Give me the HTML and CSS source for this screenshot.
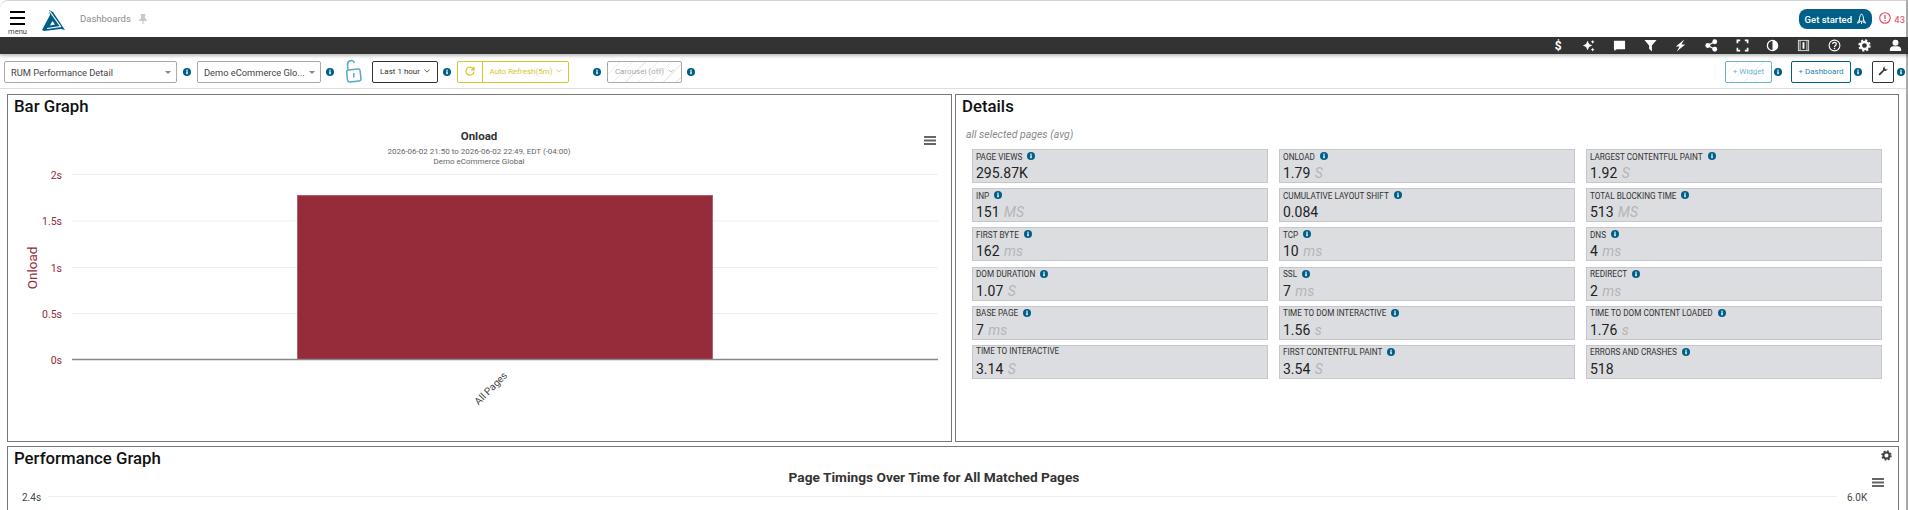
FILE: index.html
```html
<!DOCTYPE html>
<html lang="en">
<head>
    <meta charset="UTF-8">
    <title>Dashboards</title>
    <link rel="stylesheet" href="styles.css">
</head>
<body>
    <svg class="defs" width="0" height="0">
        <symbol id="i-info" viewBox="0 0 8 8">
            <circle cx="4" cy="4" r="4" fill="#005f87"/>
            <rect x="3.1" y="3.3" width="1.8" height="2.9" fill="#cfe0e8"/>
            <rect x="3.1" y="1.7" width="1.8" height="1.1" fill="#cfe0e8"/>
        </symbol>
        <symbol id="i-gear" viewBox="0 0 16 16">
            <circle cx="8" cy="8" r="4.4" fill="none" stroke="currentColor" stroke-width="3"/>
            <circle cx="8" cy="8" r="6.4" fill="none" stroke="currentColor" stroke-width="2.4" stroke-dasharray="2.6 2.43"/>
        </symbol>
        <symbol id="i-burger" viewBox="0 0 12 9">
            <rect y="0" width="12" height="2" fill="#666"/>
            <rect y="3.5" width="12" height="2" fill="#666"/>
            <rect y="7" width="12" height="2" fill="#666"/>
        </symbol>
    </svg>

    <div class="scrollbar"></div>

    <header class="header">
        <div class="menu">
            <span class="menu-lines"><i></i><i></i><i></i></span>
            <span class="menu-label">menu</span>
        </div>
        <svg class="logo" viewBox="0 0 24 21">
            <polygon points="0,20 8,5 7,0 11,2 23,20 19,19 2,21" fill="#005f87"/>
            <polyline points="7.500,1 18.500,16.500 5,18.500" fill="none" stroke="#fff" stroke-width="1.200"/>
            <polygon points="10.500,11 8,15.500 13,14.500" fill="#fff"/>
        </svg>
        <span class="crumb">Dashboards</span>
        <svg class="pin" viewBox="0 0 8 10">
            <path d="M1.5 0h5v1l-.6.5V4L8 6v1H4.6v3h-1.200V7H0V6l2.100-2V1.500L1.500 1z" fill="#c9c9c9"/>
        </svg>
        <div class="header-right">
            <button class="get-started">Get started
                <svg viewBox="0 0 12 13" width="11" height="12">
                    <path d="M6 .8C4 3 3.500 5.500 3.800 9h4.400C8.500 5.500 8 3 6 .8zM3.800 7L1.500 11l2.800-1M8.200 7l2.300 4-2.800-1M6 9.500V12" fill="none" stroke="#fff" stroke-width="1"/>
                </svg>
            </button>
            <svg class="alert" viewBox="0 0 12 12">
                <circle cx="6" cy="6" r="5.300" fill="none" stroke="#e8405a" stroke-width="1.100"/>
                <rect x="5.400" y="2.800" width="1.200" height="4.200" fill="#e8405a"/>
                <rect x="5.400" y="8" width="1.200" height="1.200" fill="#e8405a"/>
            </svg>
            <span class="alert-count">43</span>
        </div>
    </header>

    <nav class="darkbar">
        <span class="dark-item dollar">$</span>
        <span class="dark-item"><svg viewBox="0 0 14 14"><path d="M6 2l1.600 3.400L11 7 7.600 8.600 6 12 4.400 8.600 1 7l3.400-1.600zM11.500 1l.7 1.300 1.300.7-1.300.7-.7 1.300-.7-1.300L9.500 3l1.300-.7zM11.500 9.500l.7 1.300 1.300.7-1.300.7-.7 1.300-.7-1.300-1.300-.7 1.300-.7z" fill="#fff"/></svg></span>
        <span class="dark-item"><svg viewBox="0 0 14 14"><path d="M1 2h12v9H4l-2.500 2V11H1z" fill="#fff"/></svg></span>
        <span class="dark-item"><svg viewBox="0 0 14 14"><path d="M.5 1h13L8.500 7v6.500l-3-3V7z" fill="#fff"/></svg></span>
        <span class="dark-item"><svg viewBox="0 0 14 14"><path d="M11 0.500L2 8h4l-3 5.500L12 6H8z" fill="#fff"/></svg></span>
        <span class="dark-item"><svg viewBox="0 0 14 14"><circle cx="3" cy="7" r="2.600" fill="#fff"/><circle cx="10.500" cy="3" r="2.600" fill="#fff"/><circle cx="10.500" cy="11" r="2.600" fill="#fff"/><path d="M3 7l7.500-4M3 7l7.500 4" stroke="#fff" stroke-width="1.400"/></svg></span>
        <span class="dark-item"><svg viewBox="0 0 14 14"><path d="M1.500 4.500v-3h3M9.500 1.500h3v3M12.500 9.500v3h-3M4.500 12.500h-3v-3" fill="none" stroke="#fff" stroke-width="1.800"/></svg></span>
        <span class="dark-item"><svg viewBox="0 0 14 14"><circle cx="7" cy="7" r="5.500" fill="none" stroke="#fff" stroke-width="1.400"/><path d="M7 1.500a5.500 5.500 0 0 1 0 11z" fill="#fff"/></svg></span>
        <span class="dark-item"><svg viewBox="0 0 14 14"><rect x="1.500" y="1.500" width="11" height="11" fill="none" stroke="#ddd" stroke-width="1"/><path d="M3.300 1.500v11M10.700 1.500v11" stroke="#ddd" stroke-width="1"/><rect x="6" y="3.500" width="2" height="7" fill="#fff"/></svg></span>
        <span class="dark-item"><svg viewBox="0 0 14 14"><circle cx="7" cy="7" r="5.800" fill="none" stroke="#fff" stroke-width="1.200"/><path d="M5 5.500C5 3 9 3 9 5.500 9 7 7 7 7 8.500" fill="none" stroke="#fff" stroke-width="1.300"/><rect x="6.300" y="9.500" width="1.400" height="1.400" fill="#fff"/></svg></span>
        <span class="dark-item"><svg width="13" height="13"><use href="#i-gear"/></svg></span>
        <span class="dark-item"><svg viewBox="0 0 14 14"><circle cx="7" cy="4" r="3.200" fill="#fff"/><path d="M1 13V11c0-2 2-3.200 3.500-3.200h5C11 7.800 13 9 13 11v2z" fill="#fff"/></svg></span>
    </nav>

    <section class="toolbar">
        <div class="tools">
            <div class="select select-page"><span>RUM Performance Detail</span><b class="caret"></b></div>
            <svg class="info tip-1"><use href="#i-info"/></svg>
            <div class="select select-app"><span>Demo eCommerce Glo...</span><b class="caret"></b></div>
            <svg class="info tip-2"><use href="#i-info"/></svg>
            <svg class="lock" viewBox="0 0 17 24">
                <path d="M3 11L2.500 5.500C2.400 1.500 8 0 9.500 4" fill="none" stroke="#5aa9c2" stroke-width="1.500"/>
                <rect x="2" y="10.500" width="13.500" height="12" rx="2" transform="rotate(-6 8 16)" fill="none" stroke="#5aa9c2" stroke-width="1.500"/>
                <rect x="8" y="14" width="1.500" height="4.500" fill="#5aa9c2"/>
            </svg>
            <button class="btn btn-time">Last 1 hour<svg class="chev" viewBox="0 0 8 5"><path d="M.5 .5L4 4 7.500 .5" fill="none" stroke="#333"/></svg></button>
            <svg class="info tip-2"><use href="#i-info"/></svg>
            <div class="refresh">
                <span class="refresh-icon"><svg viewBox="0 0 10 10" width="10" height="10"><path d="M8.500 3.200A4 4 0 1 0 9 5.500M9 .8v3H6" fill="none" stroke="#d4c92a" stroke-width="1.200"/></svg></span>
                <span class="refresh-label">Auto Refresh(5m)<svg class="chev" viewBox="0 0 8 5"><path d="M.5 .5L4 4 7.500 .5" fill="none" stroke="#d4c92a"/></svg></span>
            </div>
            <svg class="info tip-3"><use href="#i-info"/></svg>
            <button class="btn btn-carousel">Carousel (off)<svg class="chev" viewBox="0 0 8 5"><path d="M.5 .5L4 4 7.500 .5" fill="none" stroke="#aaa"/></svg></button>
            <svg class="info tip-2"><use href="#i-info"/></svg>
        </div>
        <div class="tools">
            <button class="btn btn-widget">+ Widget</button>
            <svg class="info tip-4"><use href="#i-info"/></svg>
            <button class="btn btn-dash">+ Dashboard</button>
            <svg class="info tip-5"><use href="#i-info"/></svg>
            <button class="btn btn-wrench"><svg viewBox="0 0 12 12" width="10" height="10"><path d="M11.500 3a3 3 0 0 1-4 2.800L2.800 10.800A1 1 0 0 1 1.200 9.200L6.200 4.500A3 3 0 0 1 9 .5L7.500 2.200 9.800 4.500z" fill="#333"/></svg></button>
            <svg class="info tip-5"><use href="#i-info"/></svg>
        </div>
    </section>

    <main class="panels">
        <section class="panel">
            <h2>Bar Graph</h2>
            <svg class="chart" viewBox="8 119 943 322" width="943" height="322">
                <text class="chart-title" x="479" y="140" text-anchor="middle">Onload</text>
                <text class="chart-sub" x="479" y="154" text-anchor="middle">2026-06-02 21:50 to 2026-06-02 22:49, EDT (-04:00)</text>
                <text class="chart-sub" x="479" y="164" text-anchor="middle">Demo eCommerce Global</text>
                <use href="#i-burger" x="924" y="136" width="12" height="9"/>

                <g class="grid-lines">
                    <line x1="72" x2="938" y1="174.500" y2="174.500"/>
                    <line x1="72" x2="938" y1="221" y2="221"/>
                    <line x1="72" x2="938" y1="267.500" y2="267.500"/>
                    <line x1="72" x2="938" y1="313.500" y2="313.500"/>
                </g>
                <rect x="297.500" y="195.500" width="415" height="164" fill="#962b39" stroke="#b0606b"/>
                <line x1="72" x2="938" y1="359.500" y2="359.500" stroke="#888" stroke-width="1.500"/>

                <g class="axis-red">
                    <text x="62" y="179" text-anchor="end">2s</text>
                    <text x="62" y="225" text-anchor="end">1.5s</text>
                    <text x="62" y="272" text-anchor="end">1s</text>
                    <text x="62" y="318" text-anchor="end">0.5s</text>
                    <text x="62" y="364" text-anchor="end">0s</text>
                </g>
                <text class="axis-name" transform="translate(37 268) rotate(-90)" text-anchor="middle">Onload</text>
                <text class="axis-cat" transform="translate(508 376) rotate(-45)" text-anchor="end">All Pages</text>
            </svg>
        </section>

        <section class="panel">
            <h2>Details</h2>
            <p class="scope">all selected pages (avg)</p>
            <div class="cards">
                <div class="card"><div class="card-label">Page Views<svg class="info"><use href="#i-info"/></svg></div><div class="card-value">295.87K</div></div>
                <div class="card"><div class="card-label">Onload<svg class="info"><use href="#i-info"/></svg></div><div class="card-value">1.79 <em>S</em></div></div>
                <div class="card"><div class="card-label">Largest Contentful Paint<svg class="info"><use href="#i-info"/></svg></div><div class="card-value">1.92 <em>S</em></div></div>
                <div class="card"><div class="card-label">INP<svg class="info"><use href="#i-info"/></svg></div><div class="card-value">151 <em>MS</em></div></div>
                <div class="card"><div class="card-label">Cumulative Layout Shift<svg class="info"><use href="#i-info"/></svg></div><div class="card-value">0.084</div></div>
                <div class="card"><div class="card-label">Total Blocking Time<svg class="info"><use href="#i-info"/></svg></div><div class="card-value">513 <em>MS</em></div></div>
                <div class="card"><div class="card-label">First Byte<svg class="info"><use href="#i-info"/></svg></div><div class="card-value">162 <em>ms</em></div></div>
                <div class="card"><div class="card-label">TCP<svg class="info"><use href="#i-info"/></svg></div><div class="card-value">10 <em>ms</em></div></div>
                <div class="card"><div class="card-label">DNS<svg class="info"><use href="#i-info"/></svg></div><div class="card-value">4 <em>ms</em></div></div>
                <div class="card"><div class="card-label">DOM Duration<svg class="info"><use href="#i-info"/></svg></div><div class="card-value">1.07 <em>S</em></div></div>
                <div class="card"><div class="card-label">SSL<svg class="info"><use href="#i-info"/></svg></div><div class="card-value">7 <em>ms</em></div></div>
                <div class="card"><div class="card-label">Redirect<svg class="info"><use href="#i-info"/></svg></div><div class="card-value">2 <em>ms</em></div></div>
                <div class="card"><div class="card-label">Base Page<svg class="info"><use href="#i-info"/></svg></div><div class="card-value">7 <em>ms</em></div></div>
                <div class="card"><div class="card-label">Time to DOM Interactive<svg class="info"><use href="#i-info"/></svg></div><div class="card-value">1.56 <em>s</em></div></div>
                <div class="card"><div class="card-label">Time to DOM Content Loaded<svg class="info"><use href="#i-info"/></svg></div><div class="card-value">1.76 <em>s</em></div></div>
                <div class="card"><div class="card-label card-label-plain">Time to Interactive</div><div class="card-value">3.14 <em>S</em></div></div>
                <div class="card"><div class="card-label">First Contentful Paint<svg class="info"><use href="#i-info"/></svg></div><div class="card-value">3.54 <em>S</em></div></div>
                <div class="card"><div class="card-label">Errors and Crashes<svg class="info"><use href="#i-info"/></svg></div><div class="card-value">518</div></div>
            </div>
        </section>

        <section class="panel panel-wide">
            <h2>Performance Graph</h2>
            <svg class="panel-gear"><use href="#i-gear"/></svg>
            <svg class="chart chart-wide" viewBox="8 461 1890 70" width="1890" height="70">
                <text class="chart-title wide-title" x="934" y="482" text-anchor="middle">Page Timings Over Time for All Matched Pages</text>
                <use href="#i-burger" x="1872" y="478" width="12" height="9"/>
                <line class="wide-grid" x1="48" x2="1837" y1="496.500" y2="496.500"/>
                <text class="axis-grey" x="22" y="501">2.4s</text>
                <text class="axis-grey" x="1847" y="501">6.0K</text>
            </svg>
        </section>
    </main>
</body>
</html>
```

FILE: styles.css
```css
html, body {
    margin: 0;
    height: 510px;
    overflow: hidden;
    background: #fff;
}
body {
    font-family: Roboto, "Liberation Sans", sans-serif;
    color: #222;
    position: relative;
}
button {
    font-family: inherit;
    cursor: pointer;
}
.defs {
    position: absolute;
}
.scrollbar {
    position: absolute;
    top: 0;
    right: 0;
    width: 2px;
    height: 510px;
    background: #aaa;
}

/* top header */
.header {
    height: 36px;
    display: flex;
    align-items: flex-start;
    border-top: 1px solid #d4d4d4;
    border-top-left-radius: 8px;
}
.menu {
    width: 17px;
    margin: 10px 0 0 9px;
    display: flex;
    flex-direction: column;
    align-items: center;
}
.menu-lines i {
    display: block;
    width: 15px;
    height: 2px;
    margin-bottom: 4px;
    background: #000;
}
.menu-label {
    font-size: 7.500px;
    line-height: 8px;
    color: #444;
    margin-top: -1px;
}
.logo {
    width: 24px;
    height: 21px;
    margin: 9px 0 0 16px;
}
.crumb {
    margin: 11px 0 0 14px;
    font-size: 9.500px;
    line-height: 14px;
    color: #8a8a8a;
}
.pin {
    width: 8px;
    height: 10px;
    margin: 13px 0 0 8px;
}
.header-right {
    margin-left: auto;
    margin-right: 3px;
    display: flex;
    align-items: center;
    padding-top: 8px;
}
.get-started {
    width: 73px;
    height: 20px;
    padding: 0;
    border: 0;
    border-radius: 8px;
    background: #005f87;
    color: #fff;
    font-size: 9.500px;
    font-weight: 500;
    display: flex;
    align-items: center;
    justify-content: center;
    gap: 4px;
}
.alert {
    width: 12px;
    height: 12px;
    margin: -2px 0 0 7px;
}
.alert-count {
    margin-left: 3px;
    font-size: 9.500px;
    color: #e8405a;
}

/* dark icon strip */
.darkbar {
    height: 17px;
    margin-right: -3px;
    background: #333;
    display: flex;
    justify-content: flex-end;
    box-shadow: 0 2px 3px rgba(0,0,0,0.25);
    position: relative;
}
.dark-item {
    width: 30.700px;
    display: flex;
    align-items: center;
    justify-content: center;
    color: #fff;
}
.dark-item svg {
    width: 13px;
    height: 13px;
}
.dollar {
    font-size: 12px;
    font-weight: 700;
}

/* filter toolbar */
.toolbar {
    height: 34px;
    display: flex;
    justify-content: space-between;
    padding: 0 3px 0 4px;
    border-bottom: 1px solid #ddd;
}
.tools {
    display: flex;
    align-items: flex-start;
    padding-top: 7px;
}
.info {
    width: 8px;
    height: 8px;
    flex: none;
}
.tools .info {
    margin-top: 7px;
}
.tip-1 { margin-left: 6px; }
.tip-2 { margin-left: 5px; }
.tip-3 { margin-left: 24px; }
.tip-4 { margin-left: 2px; }
.tip-5 { margin-left: 3px; }
.select {
    height: 22px;
    box-sizing: border-box;
    border: 1px solid #aaa;
    border-radius: 2px;
    font-size: 9.300px;
    color: #444;
    white-space: nowrap;
    display: flex;
    align-items: center;
    justify-content: space-between;
    padding: 0 5px 0 6px;
}
.select-page {
    width: 173px;
}
.select-app {
    width: 124px;
    margin-left: 6px;
}
.caret {
    border: 3px solid transparent;
    border-top: 3px solid #888;
    border-bottom: 0;
}
.lock {
    width: 17px;
    height: 24px;
    margin: -2px 0 0 11px;
}
.btn {
    height: 22px;
    box-sizing: border-box;
    padding: 0 0 2px;
    border: 1px solid #333;
    border-radius: 2px;
    background: #fff;
    font-size: 8px;
    white-space: nowrap;
    color: #333;
    display: flex;
    align-items: center;
    justify-content: center;
    gap: 4px;
}
.chev {
    width: 6px;
    height: 4px;
}
.btn-time {
    width: 66px;
    margin-left: 10px;
}
.refresh {
    width: 112px;
    height: 22px;
    box-sizing: border-box;
    margin-left: 6px;
    display: flex;
    border: 1px solid #d4c92a;
    border-radius: 2px;
    font-size: 8px;
    white-space: nowrap;
    color: #d4c92a;
}
.refresh-icon {
    width: 25px;
    flex: none;
    display: flex;
    align-items: center;
    justify-content: center;
    padding-bottom: 3px;
    box-sizing: border-box;
    border-right: 1px solid #d4c92a;
}
.refresh-label {
    flex: 1;
    display: flex;
    align-items: center;
    justify-content: center;
    gap: 3px;
    padding-bottom: 2px;
}
.btn-carousel {
    width: 75px;
    margin-left: 6px;
    border-color: #aaa;
    color: #aaa;
    background: repeating-linear-gradient(135deg, #fff, #fff 8px, #eee 8px, #eee 9px);
}
.btn-widget {
    width: 47px;
    border-color: #6db3cf;
    color: #6db3cf;
    background: repeating-linear-gradient(135deg, #fff, #fff 8px, #eef5f8 8px, #eef5f8 9px);
}
.btn-dash {
    width: 60px;
    margin-left: 9px;
    border-color: #005f87;
    color: #2a86ad;
}
.btn-wrench {
    width: 22px;
    margin-left: 10px;
}

/* panels */
.panels {
    display: grid;
    grid-template-columns: 945px 944px;
    column-gap: 3px;
    row-gap: 4px;
    padding: 5px 0 0 7px;
}
.panel {
    height: 348px;
    box-sizing: border-box;
    border: 1px solid #777;
    position: relative;
}
.panel h2 {
    margin: 0;
    padding-left: 6px;
    height: 24px;
    font-size: 16.800px;
    line-height: 22px;
    font-weight: 500;
    color: #111;
}
.panel-wide {
    grid-column: 1 / -1;
    height: 80px;
}
.panel-gear {
    position: absolute;
    top: 3px;
    right: 6px;
    width: 11px;
    height: 11px;
    color: #444;
}
.chart {
    display: block;
}
.chart-wide {
    margin-top: -10px;
}
.chart-title {
    font-size: 11.500px;
    font-weight: 700;
    fill: #333;
}
.wide-title {
    font-size: 13.700px;
}
.chart-sub {
    font-size: 8px;
    fill: #666;
}
.grid-lines line, .wide-grid {
    stroke: #eee;
    stroke-width: 1;
}
.axis-red text {
    font-size: 10.500px;
    fill: #962b39;
}
.axis-name {
    font-size: 13.500px;
    fill: #962b39;
}
.axis-cat {
    font-size: 10px;
    fill: #444;
}
.axis-grey {
    font-size: 10px;
    fill: #444;
}

/* details cards */
.scope {
    margin: 0 0 0 10px;
    padding-top: 9px;
    height: 21px;
    font-size: 10.500px;
    line-height: 14px;
    font-style: italic;
    color: #888;
}
.cards {
    display: grid;
    grid-template-columns: repeat(3, 296px);
    grid-auto-rows: 34px;
    column-gap: 11px;
    row-gap: 5.200px;
    margin-left: 16px;
}
.card {
    box-sizing: border-box;
    border: 1px solid #c6c7ca;
    background: #dcdde0;
    padding: 0 3px;
}
.card-label {
    display: flex;
    align-items: center;
    gap: 5px;
    height: 14px;
    margin-bottom: 1px;
    font-size: 8.200px;
    line-height: 13px;
    text-transform: uppercase;
    color: #333;
}
.card-label .info {
    margin-top: -2px;
}
.card-label-plain {
    height: 12px;
    margin-bottom: 3px;
}
.card-value {
    font-size: 14px;
    line-height: 17px;
    color: #222;
}
.card-value em {
    color: #b4b5b8;
    margin-left: 1px;
}
```
